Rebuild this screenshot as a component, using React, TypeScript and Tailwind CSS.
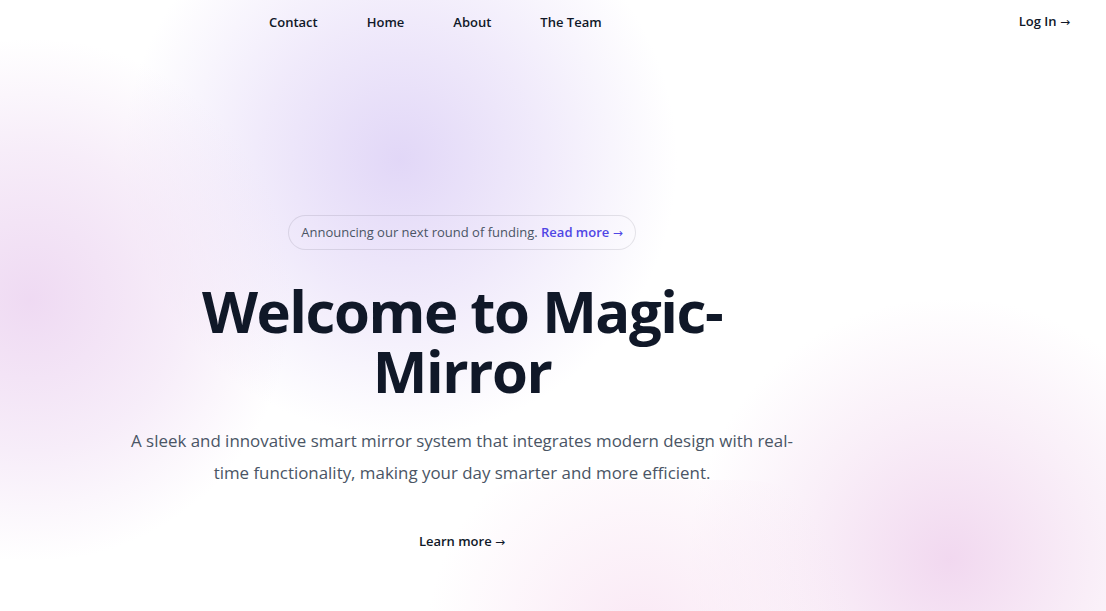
import React from "react";

const links = ["Contact", "Home", "About", "The Team"];

const Arrow = () => (
  <span aria-hidden="true" className="font-['DejaVu_Sans',sans-serif] text-[12px] font-normal">
    &rarr;
  </span>
);

const Backdrop = () => (
  <div aria-hidden="true" className="pointer-events-none absolute inset-0 -z-10 overflow-hidden">
    <div className="absolute left-[120px] top-[-120px] h-[560px] w-[560px] rounded-full bg-[radial-gradient(circle,rgba(224,213,247,0.95)_0%,rgba(230,220,248,0.6)_35%,rgba(255,255,255,0)_70%)]" />
    <div className="absolute left-[-240px] top-[40px] h-[520px] w-[540px] rounded-full bg-[radial-gradient(circle,rgba(238,216,242,0.95)_0%,rgba(240,222,244,0.55)_40%,rgba(255,255,255,0)_70%)]" />
    <div className="absolute left-[680px] top-[300px] h-[520px] w-[540px] rounded-full bg-[radial-gradient(circle,rgba(240,212,238,0.9)_0%,rgba(244,224,242,0.5)_40%,rgba(255,255,255,0)_70%)]" />
    <div className="absolute left-[380px] top-[480px] h-[320px] w-[520px] rounded-full bg-[radial-gradient(circle,rgba(248,226,242,0.8)_0%,rgba(255,255,255,0)_70%)]" />
  </div>
);

export default function App() {
  return (
    <div className="relative isolate min-h-[611px] overflow-hidden bg-white font-['Open_Sans',sans-serif]">
      <Backdrop />
      <header className="flex items-center pt-[9px] pr-[36px] pl-[269px]">
        <nav className="flex gap-x-[49px]">
          {links.map((l) => (
            <a key={l} href="#" className="text-[13px] font-semibold leading-6 text-gray-900">
              {l}
            </a>
          ))}
        </nav>
        <div className="flex flex-1 justify-end">
          <a href="#" className="text-[13px] font-semibold leading-6 text-gray-900">
            Log In <Arrow />
          </a>
        </div>
      </header>

      <main className="ml-[126px] w-[672px] pt-[182px] text-center">
        <div className="mb-8 flex justify-center">
          <div className="rounded-full px-3 py-1 text-[13px] leading-6 text-gray-600 ring-1 ring-gray-900/10">
            Announcing our next round of funding.{" "}
            <a href="#" className="font-semibold text-[#4f46e5]">
              Read more <Arrow />
            </a>
          </div>
        </div>
        <h1 className="text-[58px] font-bold leading-[60px] tracking-tight text-gray-900">
          Welcome to Magic-Mirror
        </h1>
        <p className="mt-6 text-[16.9px] leading-8 text-gray-600">
          A sleek and innovative smart mirror system that integrates modern design with real-time
          functionality, making your day smarter and more efficient.
        </p>
        <div className="mt-10 flex items-center justify-center">
          <a href="#" className="text-[13px] font-semibold leading-6 text-gray-900">
            Learn more <Arrow />
          </a>
        </div>
      </main>
    </div>
  );
}
